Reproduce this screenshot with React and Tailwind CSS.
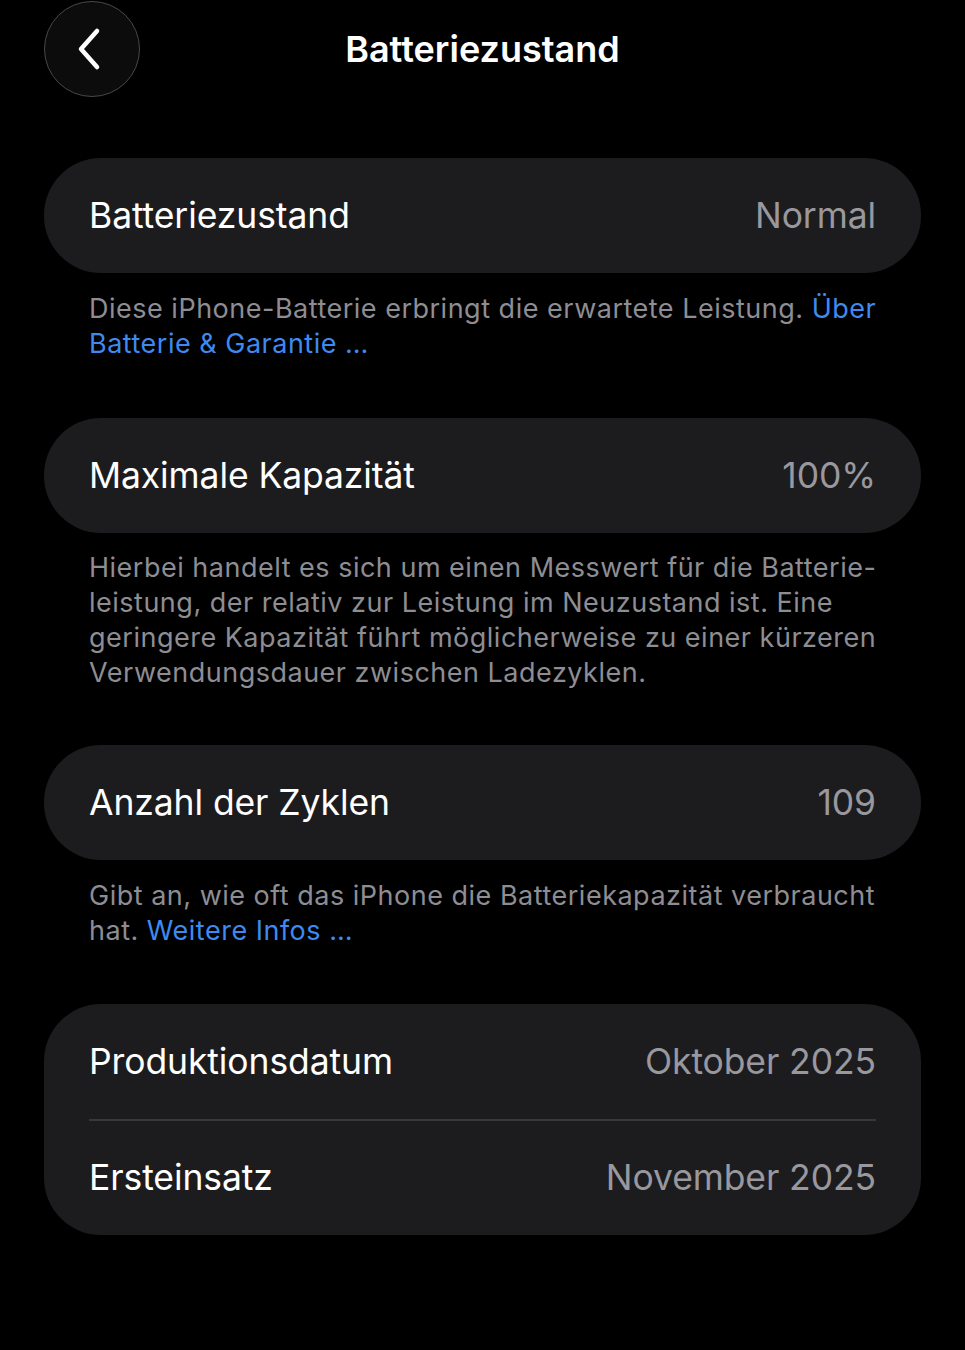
import React from "react";

function Card({ children, className = "" }) {
  return (
    <div className={`bg-[#1c1c1e] rounded-[57px] px-[45px] ${className}`}>{children}</div>
  );
}

function Row({ label, value, h = "h-[115px]" }) {
  return (
    <div className={`flex items-center justify-between ${h}`}>
      <span className="text-white text-[35.5px] tracking-[-0.1px]">{label}</span>
      <span className="text-[#98989e] text-[35.5px] tracking-[-0.1px]">{value}</span>
    </div>
  );
}

export default function App() {
  return (
    <div
      className="bg-black w-[965px] h-[1350px] overflow-hidden"
      style={{ fontFamily: "Inter, 'Noto Sans', sans-serif" }}
    >
      <div className="relative h-[98px] flex items-center justify-center">
        <div className="absolute left-[44px] top-[1px] w-[96px] h-[96px] rounded-full border border-[#48484a] bg-[#0c0c0c] flex items-center justify-center">
          <svg width="30" height="44" viewBox="0 0 30 44" className="mr-[4px]">
            <path d="M22 4 L6 22 L22 40" fill="none" stroke="white" strokeWidth="4.5" strokeLinecap="round" strokeLinejoin="round" />
          </svg>
        </div>
        <h1 className="text-white text-[36px] font-semibold tracking-[0px]">Batteriezustand</h1>
      </div>

      <div className="px-[44px] pt-[60px]">
        <Card>
          <Row label="Batteriezustand" value="Normal" />
        </Card>
        <p className="px-[45px] pt-[18px] text-[27px] leading-[35px] tracking-[0.5px] text-[#8d8d93] whitespace-nowrap">
          Diese iPhone-Batterie erbringt die erwartete Leistung.{" "}
          <span className="text-[#3e8af0]">Über</span>
          <br />
          <span className="text-[#3e8af0]">Batterie &amp; Garantie …</span>
        </p>

        <Card className="mt-[57px]">
          <Row label="Maximale Kapazität" value="100%" />
        </Card>
        <p className="px-[45px] pt-[17px] text-[27px] leading-[35px] tracking-[0.5px] text-[#8d8d93] whitespace-nowrap">
          Hierbei handelt es sich um einen Messwert für die Batterie-
          <br />
          leistung, der relativ zur Leistung im Neuzustand ist. Eine
          <br />
          geringere Kapazität führt möglicherweise zu einer kürzeren
          <br />
          Verwendungsdauer zwischen Ladezyklen.
        </p>

        <Card className="mt-[55px]">
          <Row label="Anzahl der Zyklen" value="109" />
        </Card>
        <p className="px-[45px] pt-[18px] text-[27px] leading-[35px] tracking-[0.5px] text-[#8d8d93] whitespace-nowrap">
          Gibt an, wie oft das iPhone die Batteriekapazität verbraucht
          <br />
          hat. <span className="text-[#3e8af0]">Weitere Infos …</span>
        </p>

        <Card className="mt-[56px] rounded-[52px]">
          <Row label="Produktionsdatum" value="Oktober 2025" h="h-[115px]" />
          <div className="h-[2px] bg-[#38383a]" />
          <Row label="Ersteinsatz" value="November 2025" h="h-[114px]" />
        </Card>
      </div>
    </div>
  );
}
